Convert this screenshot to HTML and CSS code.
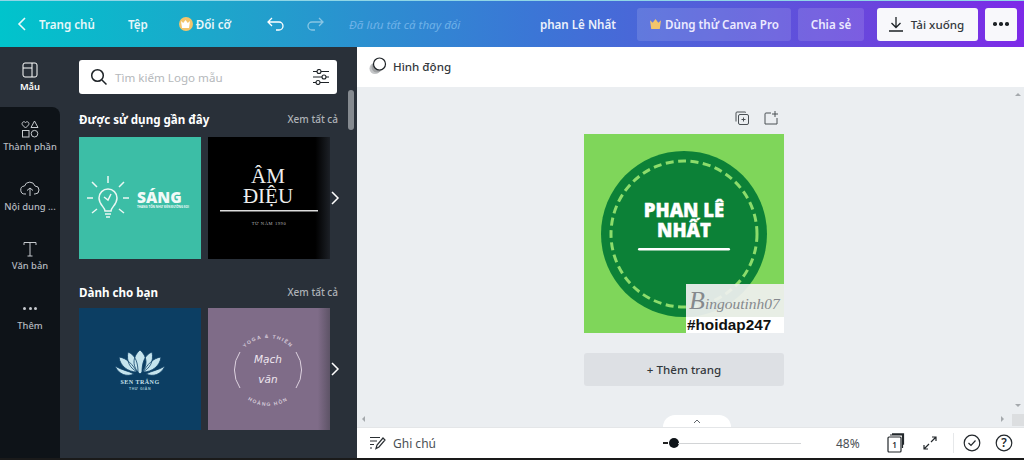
FILE: index.html
```html
<!DOCTYPE html>
<html lang="vi">

<head>
  <meta charset="UTF-8">
  <title>phan Lê Nhất - Logo</title>
  <link rel="stylesheet" href="styles.css">
</head>

<body>
  <header class="topbar">
    <div class="nav-left">
      <svg class="back" width="10" height="14" viewBox="0 0 10 14"><path d="M8 1 2 7l6 6" /></svg>
      <span class="home">Trang chủ</span>
      <span class="file">Tệp</span>
      <span class="coin"><svg width="9" height="8" viewBox="0 0 9 8"><path d="M0 1l2.200 2L4.500 0 6.800 3 9 1 8 8H1z" /></svg></span>
      <span class="resize">Đổi cỡ</span>
      <svg class="undo" width="18" height="14" viewBox="0 0 18 14"><path d="M5 1 1 5l4 4M1 5h11a4 4 0 0 1 0 8H9" /></svg>
      <svg class="redo" width="18" height="14" viewBox="0 0 18 14"><path d="M13 1l4 4-4 4M17 5H6a4 4 0 0 0 0 8h3" /></svg>
      <span class="saved">Đã lưu tất cả thay đổi</span>
    </div>
    <div class="nav-right">
      <span class="doc-name">phan Lê Nhất</span>
      <span class="btn-tint btn-pro"><svg width="11" height="10" viewBox="0 0 9 8"><path d="M0 1l2.200 2L4.500 0 6.800 3 9 1 8 8H1z" /></svg>Dùng thử Canva Pro</span>
      <span class="btn-tint btn-share">Chia sẻ</span>
      <span class="btn-white btn-download"><svg width="16" height="16" viewBox="0 0 16 16"><path d="M8 1v10M3.500 7 8 11.500 12.500 7M1 15h14" /></svg>Tải xuống</span>
      <span class="btn-white btn-more"><i></i><i></i><i></i></span>
    </div>
  </header>

  <main class="workspace">
    <nav class="rail">
      <div class="rail-item active">
        <svg width="16" height="16" viewBox="0 0 16 16"><rect x="1" y="1" width="14" height="14" rx="2" /><path d="M1 6h9M10 1v14" /></svg>
        <span>Mẫu</span>
      </div>
      <div class="rail-rest">
        <div class="rail-item">
          <svg width="18" height="18" viewBox="0 0 18 18"><path d="M4.500 8 1.500 5C0 3 2.500.5 4.500 2.500 6.500.5 9 3 7.500 5zM13.500 1l3.500 6.500h-7z" /><rect x="1.500" y="10.500" width="6.500" height="6.500" /><circle cx="13.500" cy="13.700" r="3.300" /></svg>
          <span>Thành phần</span>
        </div>
        <div class="rail-item">
          <svg width="20" height="18" viewBox="0 0 20 18"><path d="M6 14H5a4 4 0 0 1-.5-8 5.500 5.500 0 0 1 10.500 0 4 4 0 0 1 0 8h-1M10 16V8M7 10.500 10 8l3 2.500" /></svg>
          <span>Nội dung ...</span>
        </div>
        <div class="rail-item">
          <svg width="16" height="16" viewBox="0 0 16 16"><path d="M2 4V1.500h12V4M8 1.500V15M5.500 15h5" /></svg>
          <span>Văn bản</span>
        </div>
        <div class="rail-item">
          <div class="rail-dots"><i></i><i></i><i></i></div>
          <span>Thêm</span>
        </div>
      </div>
    </nav>

    <section class="panel">
      <div class="search">
        <svg class="search-icon" width="18" height="18" viewBox="0 0 18 18"><circle cx="7.500" cy="7.500" r="5.800" /><path d="m12 12 4.500 4.500" /></svg>
        <span class="search-text">Tìm kiếm Logo mẫu</span>
        <svg class="filter-icon" width="16" height="16" viewBox="0 0 16 16"><path d="M0 2.500h16M0 8h16M0 13.500h16" /><circle cx="6" cy="2.500" r="2" /><circle cx="11" cy="8" r="2" /><circle cx="5" cy="13.500" r="2" /></svg>
      </div>

      <div class="section-head first">
        <h2>Được sử dụng gần đây</h2>
        <span>Xem tất cả</span>
      </div>
      <div class="thumbs">
        <div class="thumb thumb-sang">
          <svg width="122" height="122" viewBox="0 0 122 122">
            <g fill="none" stroke="#eaf7f3" stroke-width="1.500">
              <path d="M26 74c0-4-6-6-6-13a9 9 0 0 1 18 0c0 7-6 9-6 13z" />
              <path d="M26 77h6M27 80h4M25 60l4 3 3-6M29 46v-7M18 50l-5-5M40 50l5-5M14 61H8M44 61h6M18 72l-5 4M40 72l5 4" />
            </g>
            <text class="sang-title" x="58" y="66">SÁNG</text>
            <text class="sang-sub" x="58" y="71">THANG TỐN NHƯ ĐÈN ĐƯỜNG SOI</text>
          </svg>
        </div>
        <div class="thumb thumb-amdieu">
          <svg width="122" height="122" viewBox="0 0 122 122">
            <text class="amdieu-title" x="60" y="46">ÂM</text>
            <text class="amdieu-title" x="60" y="66">ĐIỆU</text>
            <rect x="12" y="73" width="98" height="1.500" fill="#ddd" />
            <text class="amdieu-sub" x="61" y="88">TỪ NĂM 1990</text>
          </svg>
        </div>
        <svg class="thumbs-next" width="10" height="16" viewBox="0 0 10 16"><path d="m2 2 6 6-6 6" /></svg>
      </div>

      <div class="section-head">
        <h2>Dành cho bạn</h2>
        <span>Xem tất cả</span>
      </div>
      <div class="thumbs">
        <div class="thumb thumb-sen">
          <svg width="122" height="122" viewBox="0 0 122 122">
            <path d="M61 42c8 7 8 17 0 24-8-7-8-17 0-24zM49 44c8 3 10 12 10 20-8-3-12-11-10-20zM73 44c-8 3-10 12-10 20 8-3 12-11 10-20zM40 49c8 1 14 8 18 15-9 0-17-6-18-15zM82 49c-8 1-14 8-18 15 9 0 17-6 18-15zM36 58c6 4 14 5 19 8-7 3-15 1-19-8zM86 58c-6 4-14 5-19 8 7 3 15 1 19-8z" fill="#c5e4ee" stroke="#0d3f66" stroke-width=".8" />
            <text class="sen-title" x="61" y="76">SEN TRẮNG</text>
            <text class="sen-sub" x="61" y="82">THƯ GIÃN</text>
          </svg>
        </div>
        <div class="thumb thumb-mach">
          <svg width="122" height="122" viewBox="0 0 122 122">
            <defs>
              <path id="ringTop" d="M28 62a32 32 0 0 1 64 0" />
              <path id="ringBottom" d="M24 62a36 36 0 0 0 72 0" />
            </defs>
            <path d="M32 44a32 32 0 0 0 0 36M88 44a32 32 0 0 1 0 36" fill="none" stroke="#ddd2df" stroke-width="1" />
            <text class="mach-ring"><textPath href="#ringTop" startOffset="50%">YOGA &amp; THIỀN</textPath></text>
            <text class="mach-title" x="60" y="55">Mạch</text>
            <text class="mach-title" x="60" y="75">văn</text>
            <text class="mach-ring"><textPath href="#ringBottom" startOffset="50%">HOÀNG HÔN</textPath></text>
          </svg>
        </div>
        <svg class="thumbs-next" width="10" height="16" viewBox="0 0 10 16"><path d="m2 2 6 6-6 6" /></svg>
      </div>

      <div class="panel-scroll"></div>
      <div class="panel-handle">
        <svg width="5" height="8" viewBox="0 0 5 8"><path d="M4 1 1 4l3 3" /></svg>
      </div>
    </section>

    <section class="editor">
      <div class="toolbar">
        <svg width="19" height="18" viewBox="0 0 19 18"><circle cx="6" cy="11.500" r="5.500" fill="#c4c6c8" /><circle cx="8" cy="10" r="5.500" fill="#a0a2a4" /><circle cx="10.500" cy="7" r="6" fill="#fff" stroke="#1d2226" stroke-width="1.200" /></svg>
        <span>Hình động</span>
      </div>

      <div class="canvas-area">
        <div class="page-tools">
          <svg width="14" height="14" viewBox="0 0 14 14"><rect x="3.500" y="3.500" width="10" height="10" rx="1.500" /><path d="M10.500 1.500V1H2a1 1 0 0 0-1 1v8.500" /><path d="M8.500 6.500v4M6.500 8.500h4" /></svg>
          <svg width="14" height="14" viewBox="0 0 14 14"><path d="M7 2H2a1 1 0 0 0-1 1v10h12V7M11 0v6M8 3h6" /></svg>
        </div>
        <div class="page">
          <svg class="logo" width="200" height="199" viewBox="0 0 200 199">
            <circle cx="100" cy="100" r="83" fill="#0c8137" />
            <circle cx="100" cy="100" r="73" fill="none" stroke="#8cdc6b" stroke-width="3" stroke-dasharray="8 4.500" />
            <text class="logo-title" x="100" y="83">PHAN LÊ</text>
            <text class="logo-title" x="100" y="103">NHẤT</text>
            <rect x="54" y="114" width="92" height="2.500" rx="1.200" fill="#fff" />
          </svg>
          <div class="stamp">
            <div class="stamp-sign"><span class="stamp-initial">B</span>ingoutinh07</div>
            <div class="stamp-tag">#hoidap247</div>
          </div>
        </div>
        <div class="add-page">+ Thêm trang</div>

        <span class="arrow arrow-left"></span>
        <span class="arrow arrow-right"></span>
        <span class="arrow arrow-up"></span>
        <span class="arrow arrow-down"></span>
        <div class="scroll-corner"></div>
        <div class="notes-tab">
          <svg width="8" height="5" viewBox="0 0 8 5"><path d="m1 4 3-3 3 3" /></svg>
        </div>
      </div>

      <footer class="statusbar">
        <div class="notes">
          <svg width="16" height="14" viewBox="0 0 16 14"><path d="M0 1.500h10M0 5h7M0 8.500h4M0 12h2M6 12.500l1-3.500 6-7 2 2-6 7z" /></svg>
          <span>Ghi chú</span>
        </div>
        <div class="zoom">
          <span class="zoom-minus"></span>
          <span class="zoom-knob"></span>
          <span class="zoom-track"></span>
        </div>
        <span class="zoom-value">48%</span>
        <svg class="status-icon pages" width="18" height="20" viewBox="0 0 18 20"><rect x="1" y="4" width="13" height="15" rx="1" /><path d="M3 2h12.500v13M5 .8h11.500v11" /><text class="pages-num" x="7.500" y="15">1</text></svg>
        <svg class="status-icon expand" width="14" height="14" viewBox="0 0 14 14"><path d="M8 6l5-5M9 1h4v4M6 8l-5 5M1 9v4h4" /></svg>
        <span class="status-sep"></span>
        <svg class="status-icon check" width="18" height="18" viewBox="0 0 18 18"><circle cx="9" cy="9" r="7.800" /><path d="m5.500 9 2.500 2.500 4.500-5" /></svg>
        <svg class="status-icon help" width="18" height="18" viewBox="0 0 18 18"><circle cx="9" cy="9" r="7.800" /><text class="help-mark" x="9" y="13">?</text></svg>
      </footer>
    </section>
  </main>
</body>

</html>
```

FILE: styles.css
```css
* {
  box-sizing: border-box;
}

body {
  margin: 0;
  width: 1024px;
  height: 460px;
  overflow: hidden;
  display: flex;
  flex-direction: column;
  font-family: "Noto Sans", "Open Sans", sans-serif;
  font-size: 11.600px;
  color: #1d2226;
  background: #0e1318;
  border-bottom: 2px solid #1a1a1a;
}

svg {
  flex: none;
  display: block;
}

/* top bar */
.topbar {
  height: 47px;
  flex: none;
  display: flex;
  align-items: center;
  justify-content: space-between;
  color: #fff;
  font-weight: 600;
  white-space: nowrap;
  background: linear-gradient(90deg, #00c4cc 0%, #1ea5cb 22%, #3b76d6 52%, #6a45dd 85%, #7d2ae8 100%);
  border-top: 1px solid #8fd6e6;
}

.nav-left,
.nav-right {
  display: flex;
  align-items: center;
}

.back {
  margin-left: 17px;
  fill: none;
  stroke: #e8fbfb;
  stroke-width: 1.600;
}

.home {
  margin-left: 12px;
  opacity: .9;
}

.file {
  margin-left: 33px;
  opacity: .9;
}

.coin {
  margin-left: 31px;
  width: 14px;
  height: 14px;
  border-radius: 50%;
  background: #f3c56b;
  display: flex;
  align-items: center;
  justify-content: center;
}

.coin svg {
  fill: #fff;
}

.resize {
  margin-left: 3px;
  opacity: .9;
}

.undo,
.redo {
  fill: none;
  stroke: #fff;
  stroke-width: 1.300;
}

.undo {
  margin-left: 36px;
}

.redo {
  margin-left: 21px;
  opacity: .45;
}

.saved {
  margin-left: 25px;
  font-weight: 400;
  font-style: italic;
  color: #6fb2e8;
}

.doc-name {
  margin-right: 21px;
  opacity: .9;
}

.btn-tint {
  height: 33px;
  display: flex;
  align-items: center;
  border-radius: 3px;
  background: rgba(255, 255, 255, .13);
  color: #eceaff;
}

.btn-pro {
  width: 154px;
  padding-left: 13px;
  gap: 4px;
  margin-right: 7px;
}

.btn-pro svg {
  fill: #f3c56b;
}

.btn-share {
  width: 66px;
  justify-content: center;
  margin-right: 13px;
}

.btn-white {
  height: 33px;
  display: flex;
  align-items: center;
  justify-content: center;
  border-radius: 3px;
  background: #f8f8fb;
  color: #33383c;
  font-weight: 500;
}

.btn-download {
  width: 101px;
  gap: 7px;
  padding-right: 3px;
  margin-right: 7px;
}

.btn-download svg {
  fill: none;
  stroke: #1d2226;
  stroke-width: 1.300;
}

.btn-more {
  width: 32px;
  gap: 2.500px;
  margin-right: 7px;
}

.btn-more i {
  width: 3.500px;
  height: 3.500px;
  border-radius: 50%;
  background: #1d2226;
}

/* main area */
.workspace {
  flex: 1;
  min-height: 0;
  display: flex;
}

.rail {
  width: 60px;
  flex: none;
  background: #293039;
  display: flex;
  flex-direction: column;
}

.rail-rest {
  flex: 1;
  background: #0e1318;
  border-radius: 0 8px 0 0;
}

.rail-item {
  height: 60px;
  flex: none;
  display: flex;
  flex-direction: column;
  align-items: center;
  justify-content: center;
  gap: 2px;
  font-size: 9.400px;
  font-weight: 500;
  color: #b6bbc0;
  white-space: nowrap;
}

.rail-rest .rail-item {
  padding-bottom: 2px;
}

.rail-item svg {
  fill: none;
  stroke: #c6cace;
  stroke-width: 1;
}

.rail-item.active {
  color: #fff;
  font-weight: 600;
}

.rail-item.active svg {
  stroke: #fff;
}

.rail-dots {
  height: 16px;
  display: flex;
  align-items: center;
  gap: 2.500px;
}

.rail-dots i {
  width: 3px;
  height: 3px;
  border-radius: 50%;
  background: #c6cace;
}

.panel {
  position: relative;
  width: 297px;
  flex: none;
  padding: 13px 0 0 19px;
  background: #293039;
}

.search {
  width: 258px;
  height: 34px;
  display: flex;
  align-items: center;
  padding: 0 8px 0 11px;
  border-radius: 3px;
  background: #fff;
}

.search-icon {
  fill: none;
  stroke: #1d2226;
  stroke-width: 1.500;
}

.search-text {
  margin-left: 7px;
  flex: 1;
  color: #b5b8bb;
}

.filter-icon {
  fill: #fff;
  stroke: #1d2226;
  stroke-width: 1.100;
}

.section-head {
  width: 259px;
  height: 20px;
  display: flex;
  align-items: center;
  justify-content: space-between;
  margin-top: 23px;
  color: #fff;
}

.section-head.first {
  margin-top: 15px;
  height: 22px;
  align-items: flex-start;
  padding-top: 3px;
}

.section-head h2 {
  margin: 0;
  font-size: 11.600px;
  font-weight: 700;
}

.section-head span {
  font-size: 10px;
  font-weight: 500;
  color: #aeb3b8;
}

.thumbs {
  position: relative;
  display: flex;
  gap: 7px;
  margin-top: 6px;
}

.thumb {
  width: 122px;
  height: 122px;
}

.thumbs-next {
  position: absolute;
  left: 251px;
  top: 53px;
  fill: none;
  stroke: #fff;
  stroke-width: 1.500;
}

.thumb-sang {
  background: #3cbea6;
}

.thumb-amdieu {
  background: linear-gradient(90deg, #000 88%, #1c2026 100%);
}

.thumb-sen {
  background: #0c3e63;
}

.thumb-mach {
  background: linear-gradient(90deg, #7f6c88 90%, #5d5366 100%);
}

.thumb text {
  text-anchor: middle;
}

.thumb .sang-title,
.thumb .sang-sub {
  text-anchor: start;
  fill: #f1faf8;
}

.sang-title {
  font: 800 15.500px "Open Sans", sans-serif;
}

.sang-sub {
  font: 700 3px "Open Sans", sans-serif;
}

.amdieu-title {
  font: 400 21px "Liberation Serif", serif;
  fill: #eee;
}

.amdieu-sub {
  font: 400 4.500px "Liberation Serif", serif;
  letter-spacing: .6px;
  fill: #bbb;
}

.sen-title {
  font: 700 6px "Liberation Serif", serif;
  letter-spacing: .5px;
  fill: #c9e3ec;
}

.sen-sub {
  font: 700 3.500px "Liberation Sans", sans-serif;
  letter-spacing: .6px;
  fill: #9fc4d2;
}

.mach-title {
  font: italic 400 10.500px "DejaVu Sans", sans-serif;
  fill: #eee6ef;
}

.mach-ring {
  font: 700 5px "Liberation Sans", sans-serif;
  letter-spacing: 1.300px;
  fill: #d8cddb;
}

.panel-scroll {
  position: absolute;
  right: 3px;
  top: 43px;
  width: 6px;
  height: 40px;
  border-radius: 3px;
  background: #858a90;
}

.panel-handle {
  position: absolute;
  left: 100%;
  top: 176px;
  width: 10px;
  height: 60px;
  display: flex;
  align-items: center;
  justify-content: center;
  background: #293039;
  border-radius: 0 8px 8px 0;
}

.panel-handle svg {
  fill: none;
  stroke: #dfe2e5;
  stroke-width: 1.200;
}

/* editor */
.editor {
  flex: 1;
  min-width: 0;
  display: flex;
  flex-direction: column;
  background: #fff;
}

.toolbar {
  height: 40px;
  flex: none;
  display: flex;
  align-items: center;
  gap: 5px;
  padding: 0 0 2px 12px;
  font-weight: 500;
  color: #33383c;
}

.canvas-area {
  position: relative;
  flex: 1;
  min-height: 0;
  display: flex;
  flex-direction: column;
  align-items: center;
  background: #ebeef1;
  padding-right: 13px;
}

.page-tools {
  width: 200px;
  height: 47px;
  flex: none;
  display: flex;
  justify-content: flex-end;
  align-items: flex-end;
  gap: 15px;
  padding: 0 6px 9px 0;
}

.page-tools svg {
  fill: none;
  stroke: #4a5055;
  stroke-width: 1;
}

.page {
  position: relative;
  width: 200px;
  height: 199px;
  flex: none;
  background: #7fd65a;
}

.logo-title {
  font: 800 18.500px "Open Sans", sans-serif;
  fill: #fff;
  stroke: #fff;
  stroke-width: .4;
  text-anchor: middle;
}

.stamp {
  position: absolute;
  right: 0;
  bottom: 0;
  width: 98px;
  height: 49px;
  background: rgba(240, 240, 240, .93);
}

.stamp-sign {
  height: 33px;
  overflow: hidden;
  font: italic 300 15.500px "Liberation Serif", serif;
  line-height: 33px;
  padding-left: 3px;
  color: #85898d;
  white-space: nowrap;
}

.stamp-initial {
  font-size: 26px;
}

.stamp-tag {
  height: 16px;
  background: #fff;
  padding-left: 1px;
  font: 700 15.300px/16px "Liberation Sans", "Noto Sans", sans-serif;
  color: #111;
}

.add-page {
  width: 200px;
  height: 33px;
  flex: none;
  margin-top: 20px;
  display: flex;
  align-items: center;
  justify-content: center;
  border-radius: 3px;
  background: #dde0e4;
  font-weight: 500;
  color: #33383c;
}

.arrow {
  position: absolute;
  width: 0;
  height: 0;
  border: 3px solid transparent;
}

.arrow-left {
  left: 2px;
  bottom: 5px;
  border-right-color: #a5a9ad;
}

.arrow-right {
  right: 17px;
  bottom: 5px;
  border-left-color: #a5a9ad;
}

.arrow-up {
  right: 3px;
  top: 3px;
  border-bottom-color: #a5a9ad;
}

.arrow-down {
  right: 3px;
  bottom: 17px;
  border-top-color: #a5a9ad;
}

.scroll-corner {
  position: absolute;
  right: 0;
  bottom: 1px;
  width: 12px;
  height: 12px;
  background: #dcdee0;
}

.notes-tab {
  position: absolute;
  left: 306px;
  bottom: 0;
  width: 68px;
  height: 12px;
  display: flex;
  justify-content: center;
  align-items: center;
  background: #fff;
  border-radius: 14px 14px 0 0;
}

.notes-tab svg {
  fill: none;
  stroke: #60666b;
  stroke-width: 1;
}

.statusbar {
  height: 31px;
  flex: none;
  display: flex;
  align-items: center;
  background: #fff;
  border-top: 1px solid #e4e6e8;
  color: #4a4f54;
}

.notes {
  width: 306px;
  display: flex;
  align-items: center;
  gap: 7px;
  padding-left: 13px;
  font-size: 12px;
}

.notes svg {
  fill: none;
  stroke: #2a2f33;
  stroke-width: 1.200;
}

.zoom {
  width: 167px;
  display: flex;
  align-items: center;
}

.zoom-minus {
  width: 5px;
  height: 1.500px;
  margin-right: 1px;
  background: #222;
}

.zoom-knob {
  width: 10px;
  height: 10px;
  border-radius: 50%;
  background: #0e1318;
  margin-right: -1px;
}

.zoom-track {
  width: 123px;
  height: 1px;
  background: #d2d4d6;
}

.zoom-value {
  width: 40px;
  margin-left: 6px;
  font-size: 12px;
}

.status-icon {
  fill: none;
  stroke: #22272b;
  stroke-width: 1.200;
}

.pages {
  margin-left: 11px;
}

.expand {
  margin-left: 18px;
}

.status-sep {
  width: 1px;
  height: 20px;
  margin-left: 16px;
  background: #e6e8ea;
}

.check {
  margin-left: 9px;
}

.help {
  margin-left: 14px;
}

.pages-num {
  font: 600 8px "Noto Sans", sans-serif;
  fill: #22272b;
  stroke: none;
  text-anchor: middle;
}

.help-mark {
  font: 600 12px "Noto Sans", sans-serif;
  fill: #22272b;
  stroke: none;
  text-anchor: middle;
}
```
